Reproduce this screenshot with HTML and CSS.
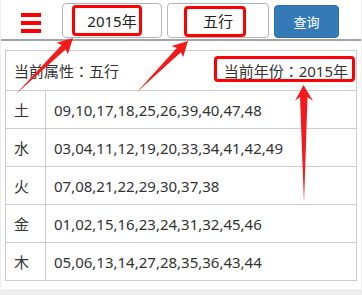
FILE: index.html
```html
<!DOCTYPE html>
<html lang="zh">
  <head>
    <meta charset="UTF-8" />
    <meta name="viewport" content="width=device-width, initial-scale=1.0" />
    <title>五行属性</title>
    <link rel="stylesheet" href="styles.css">
  </head>
  <body>
    <div class="page">
      <div class="topbar">
        <div class="menu"><span></span><span></span><span></span></div>
        <div class="pick pick-year">
          <select id="year">
            <option>2015年</option>
          </select>
          <i class="mark"></i>
        </div>
        <div class="pick pick-kind">
          <select id="kind">
            <option>五行</option>
          </select>
          <i class="mark"></i>
        </div>
        <button class="btn" type="button">查询</button>
      </div>

      <div class="panel">
        <div class="panel-head">
          <span>当前属性<span class="colon" lang="ja">：</span>五行</span>
          <span class="now">当前年份<span class="colon" lang="ja">：</span>2015年<i class="mark"></i></span>
        </div>
        <div class="row"><div class="el">土</div><div class="nums">09,10,17,18,25,26,39,40,47,48</div></div>
        <div class="row"><div class="el">水</div><div class="nums">03,04,11,12,19,20,33,34,41,42,49</div></div>
        <div class="row"><div class="el">火</div><div class="nums">07,08,21,22,29,30,37,38</div></div>
        <div class="row"><div class="el">金</div><div class="nums">01,02,15,16,23,24,31,32,45,46</div></div>
        <div class="row"><div class="el">木</div><div class="nums">05,06,13,14,27,28,35,36,43,44</div></div>
      </div>
    </div>

    <!-- annotation arrows -->
    <svg class="arrows" width="362" height="295" viewBox="0 0 362 295">
      <polygon points="16,94 61.6,45 56.7,42.8 73,38 67.9,54.2 65.8,49.2" />
      <polygon points="137,92 176.7,48.1 171.7,45.9 188,41 183.1,57.3 180.9,52.3" />
      <polygon points="304,203 300,97 295,101 303.5,85 313,101 307.5,97" />
    </svg>
  </body>
</html>
```

FILE: styles.css
```css
body {
  margin: 0;
  background: #eee;
  font-family: "Noto Sans", "Noto Sans CJK SC", sans-serif;
  font-size: 15px;
  color: #333;
}

.page {
  margin: 0 1px;
  padding-bottom: 8px;
  background: #fff;
}

.topbar {
  display: flex;
  align-items: flex-end;
  height: 38px;
  padding: 0 0 1px 20px;
  border-bottom: 2px solid #a3a3a3;
}

.menu {
  align-self: flex-start;
  display: flex;
  flex-direction: column;
  gap: 4px;
  width: 20px;
  margin: 13px 21px 0 0;
}

.menu span {
  height: 4px;
  background: #f00;
}

.pick {
  position: relative;
  height: 35px;
  margin-right: 5px;
}

.pick-year {
  width: 100px;
}

.pick-kind {
  width: 102px;
}

.pick select {
  width: 100%;
  height: 100%;
  padding: 0;
  appearance: none;
  -webkit-appearance: none;
  border: 1px solid #b5b5b5;
  border-radius: 4px;
  background: #fff;
  font: inherit;
  color: #222;
  text-align: center;
  text-align-last: center;
}

.mark {
  position: absolute;
  border: 3px solid #f00;
  border-radius: 4px;
  pointer-events: none;
}

.pick-year .mark {
  left: 10px;
  right: 20px;
  top: 2px;
  bottom: 2px;
}

.pick-kind .mark {
  left: 17px;
  right: 23px;
  top: 3px;
  bottom: 1px;
}

.btn {
  width: 65px;
  height: 33px;
  padding: 0;
  background: #337ab7;
  border: 1px solid #2e6da4;
  border-radius: 4px;
  color: #fff;
  font-family: inherit;
  font-size: 13px;
}

.panel {
  margin: 9px 4px 0;
  border: 1px solid #ccc;
}

.panel-head {
  display: flex;
  justify-content: space-between;
  align-items: center;
  height: 39px;
  padding: 0 8px;
}

/* full-width colon centred, as in YaHei */
.colon {
  font-family: "Noto Sans CJK JP", "Noto Sans CJK SC", sans-serif;
}

.now {
  position: relative;
  line-height: 20px;
}

.now .mark {
  left: -10px;
  right: -7px;
  top: -5px;
  bottom: -1px;
}

.row {
  display: flex;
  height: 37px;
  border-top: 1px solid #ccc;
}

.el {
  display: flex;
  align-items: center;
  width: 40px;
  box-sizing: border-box;
  padding-left: 8px;
  border-right: 1px solid #ccc;
}

.nums {
  display: flex;
  align-items: center;
  padding-left: 8px;
}

.arrows {
  position: absolute;
  left: 0;
  top: 0;
  fill: #f21a1a;
  pointer-events: none;
}
```
